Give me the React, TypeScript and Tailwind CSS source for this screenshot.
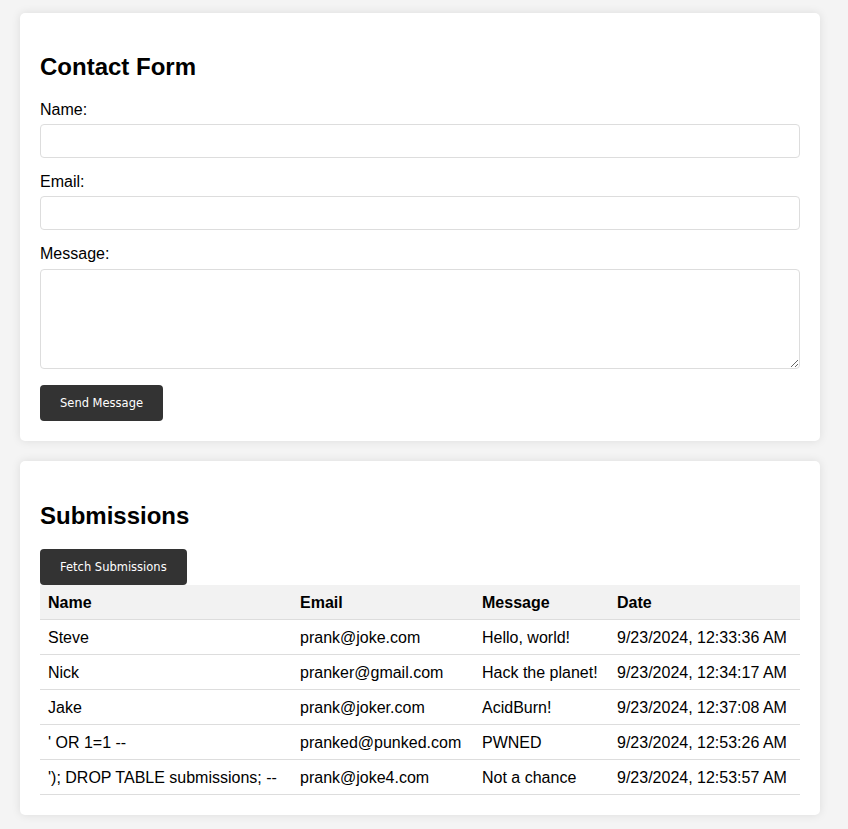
import { useState } from "react";

type Submission = {
  name: string;
  email: string;
  message: string;
  date: string;
};

const submissions: Submission[] = [
  { name: "Steve", email: "prank@joke.com", message: "Hello, world!", date: "9/23/2024, 12:33:36 AM" },
  { name: "Nick", email: "pranker@gmail.com", message: "Hack the planet!", date: "9/23/2024, 12:34:17 AM" },
  { name: "Jake", email: "prank@joker.com", message: "AcidBurn!", date: "9/23/2024, 12:37:08 AM" },
  { name: "' OR 1=1 --", email: "pranked@punked.com", message: "PWNED", date: "9/23/2024, 12:53:26 AM" },
  { name: "'); DROP TABLE submissions; --", email: "prank@joke4.com", message: "Not a chance", date: "9/23/2024, 12:53:57 AM" },
];

const inputCls =
  "block w-full h-[34px] px-2 border border-[#ddd] rounded-[4px] bg-white text-base outline-none";
const btnCls =
  "h-9 px-5 pt-px bg-[#333] text-white rounded-[4px] text-[11.5px] font-['DejaVu_Sans',Verdana,sans-serif] cursor-pointer";
const cellCls = "px-2 pt-[9px] pb-[7px] border-b border-[#ddd] whitespace-nowrap";

export default function App() {
  const [name, setName] = useState("");
  const [email, setEmail] = useState("");
  const [message, setMessage] = useState("");

  return (
    <div className="min-h-screen bg-[#f4f4f4] px-5 pt-[13px] pb-5 font-['Liberation_Sans',Arial,sans-serif] text-black">
      <div className="max-w-[800px] bg-white rounded-[5px] shadow-[0_0_10px_rgba(0,0,0,0.1)] p-5 mb-5">
        <h2 className="text-2xl font-bold leading-7 my-5">Contact Form</h2>
        <label className="block text-base leading-[18px] mb-[5px]">Name:</label>
        <input className={inputCls} value={name} onChange={(e) => setName(e.target.value)} />
        <label className="block text-base leading-[18px] mt-[15px] mb-[5px]">Email:</label>
        <input className={inputCls} value={email} onChange={(e) => setEmail(e.target.value)} />
        <label className="block text-base leading-[18px] mt-[15px] mb-[6px]">Message:</label>
        <textarea
          className="block w-full h-[100px] p-2 border border-[#ddd] rounded-[4px] text-base outline-none"
          value={message}
          onChange={(e) => setMessage(e.target.value)}
        />
        <button className={`${btnCls} mt-4`}>Send Message</button>
      </div>

      <div className="max-w-[800px] bg-white rounded-[5px] shadow-[0_0_10px_rgba(0,0,0,0.1)] p-5">
        <h2 className="text-2xl font-bold leading-7 mt-[21px] mb-[19px]">Submissions</h2>
        <button className={btnCls}>Fetch Submissions</button>
        <table className="w-full border-collapse text-base leading-[18px]">
          <thead>
            <tr className="bg-[#f2f2f2]">
              <th className={`${cellCls} w-[252px] text-left font-bold`}>Name</th>
              <th className={`${cellCls} w-[182px] text-left font-bold`}>Email</th>
              <th className={`${cellCls} w-[135px] text-left font-bold`}>Message</th>
              <th className={`${cellCls} text-left font-bold`}>Date</th>
            </tr>
          </thead>
          <tbody>
            {submissions.map((s) => (
              <tr key={s.date}>
                <td className={cellCls}>{s.name}</td>
                <td className={cellCls}>{s.email}</td>
                <td className={cellCls}>{s.message}</td>
                <td className={cellCls}>{s.date}</td>
              </tr>
            ))}
          </tbody>
        </table>
      </div>
    </div>
  );
}
